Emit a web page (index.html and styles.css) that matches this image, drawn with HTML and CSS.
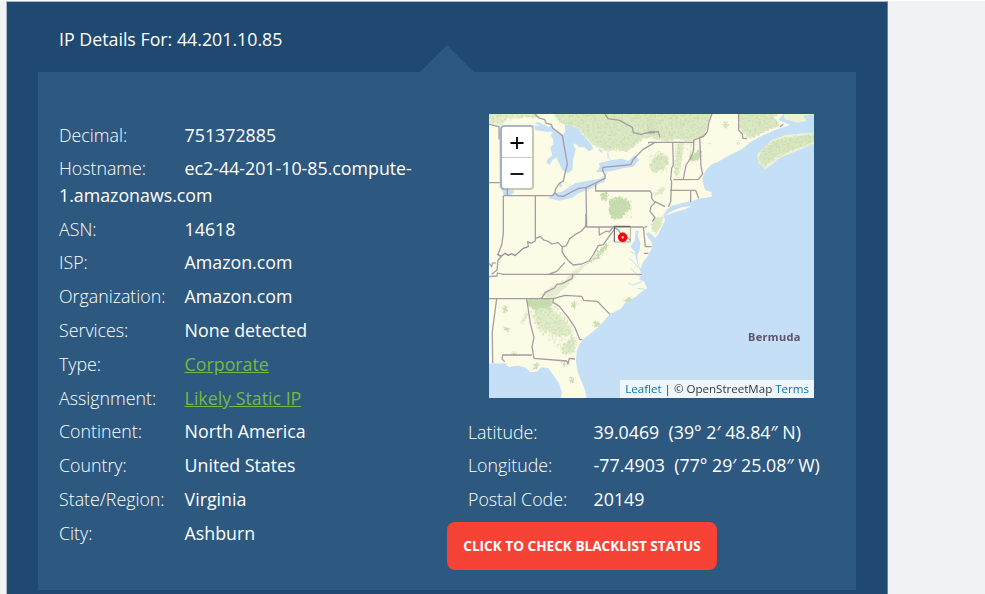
FILE: index.html
```html
<!DOCTYPE html>
<html lang="en">
<head>
<meta charset="utf-8">
<title>IP Details For: 44.201.10.85</title>
<link rel="stylesheet" href="styles.css">
</head>
<body>
<main class="card">
  <h1 class="title">IP Details For: 44.201.10.85</h1>
  <section class="panel">
    <div class="details">
      <p class="row"><span class="label">Decimal:</span><span>751372885</span></p>
      <p class="row"><span class="label">Hostname:</span><span>ec2-44-201-10-85.compute-<wbr>1.amazonaws.com</span></p>
      <p class="row"><span class="label">ASN:</span><span>14618</span></p>
      <p class="row"><span class="label">ISP:</span><span>Amazon.com</span></p>
      <p class="row"><span class="label">Organization:</span><span>Amazon.com</span></p>
      <p class="row"><span class="label">Services:</span><span>None detected</span></p>
      <p class="row"><span class="label">Type:</span><a href="#">Corporate</a></p>
      <p class="row"><span class="label">Assignment:</span><a href="#">Likely Static IP</a></p>
      <p class="row"><span class="label">Continent:</span><span>North America</span></p>
      <p class="row"><span class="label">Country:</span><span>United States</span></p>
      <p class="row"><span class="label">State/Region:</span><span>Virginia</span></p>
      <p class="row"><span class="label">City:</span><span>Ashburn</span></p>
    </div>
    <div class="location">
      <div class="map">
        <svg class="tiles" viewBox="12 12 975 852" preserveAspectRatio="none">
          <defs>
            <filter id="rough" x="-20%" y="-20%" width="140%" height="140%">
              <feTurbulence type="fractalNoise" baseFrequency="0.15" numOctaves="3" seed="4"/>
              <feDisplacementMap in="SourceGraphic" scale="16" xChannelSelector="R" yChannelSelector="G"/>
              <feGaussianBlur stdDeviation=".7"/>
            </filter>
            <filter id="mottle" x="0" y="0" width="100%" height="100%">
              <feTurbulence type="fractalNoise" baseFrequency="0.14" numOctaves="3" seed="9"/>
              <feColorMatrix values="0 0 0 0 0  0 0 0 0 0  0 0 0 0 0  4 0 0 0 -1.9"/>
              <feComposite in="SourceGraphic" operator="in"/>
            </filter>
          </defs>
          <rect x="0" y="0" width="1000" height="880" fill="#c5dff6"/>
          <!-- mainland -->
          <path fill="#fcfbe5" d="M0 0H900L895 12L880 30L915 45L865 62L825 80L795 97L775 115L755 125L725 140L700 155L680 163L665 178L658 190L652 205L655 222L660 240L680 247L683 240L677 258L663 263L645 265L625 272L590 280L560 287L545 300L535 316L540 330L534 345L518 375L510 385L503 376L490 366L483 372L500 398L502 412L488 438L472 460L466 478L460 462L456 440L464 420L466 400L458 376L462 362L452 362L450 390L436 410L450 425L452 445L464 478L470 495L462 508L478 515L486 535L470 545L452 560L425 575L405 598L375 612L355 635L340 652L315 672L295 688L283 703L275 725L273 755L278 785L290 815L300 840L305 870H226L231 848L222 820L205 795L190 775L170 772L155 785L137 787L120 772L100 767L70 770L60 760L0 762Z"/>
          <path fill="#fcfbe5" d="M537 318L560 303L590 292L622 287L600 298L570 307Z"/>
          <path fill="#fcfbe5" d="M672 252l10 4 -4 6 -14-2Z"/>
          <path fill="#eef2d4" d="M1000 67L960 70L900 75L860 90L835 115L817 132L820 158L840 178L855 168L885 143L930 125L960 112L1000 98Z"/>
          <path fill="#eef2d4" d="M890 0L900 28L940 38L965 32L955 18L985 12V0Z"/>
          <!-- vegetation -->
          <g fill="#d3e3bc" filter="url(#rough)">
            <path opacity=".6" d="M0 0H150L165 25L120 24L70 28L50 44L0 40Z"/>
            <path opacity=".8" d="M200 0H510V65L500 82L470 88L450 110L425 125L395 120L360 122L325 105L295 75L280 55L240 45L215 30Z"/>
            <path opacity=".8" d="M490 0H685L672 35L655 78L630 90L595 92L575 85L550 95L505 88L490 60Z"/>
            <path opacity=".8" d="M762 0H885L868 25L885 45L835 65L805 82L785 85L774 65L762 55Z"/>
            <path opacity=".8" d="M990 72L895 83L860 95L840 112L825 128L820 148L835 170L860 152L885 135L930 118L990 95Z"/>
            <path d="M345 252L358 245L370 255L367 270L350 270ZM372 268L405 260L425 270L440 285L420 312L402 330L380 325L372 305Z" fill="#c9ddb0"/>
            <path d="M500 150L520 128L548 140L552 160L535 178L508 188L495 175Z" opacity=".8"/>
            <path d="M612 135L630 130L642 118L650 132L640 150L618 155Z" fill="#c9ddb0"/>
            <path d="M575 100L595 100L592 135L585 185L575 205L568 180Z" opacity=".7"/>
            <path d="M508 325L536 318L528 350L510 375L498 350Z" opacity=".8"/>
            <path d="M385 384L375 395L340 422L332 442L306 458L323 456L345 440Z" fill="#c9ddb0"/>
            <path d="M338 410L323 440L300 460L265 483L240 510L210 525L165 555L205 565L240 535L292 476L330 446Z" opacity=".6"/>
            <path d="M128 567L205 565L200 590L150 600L128 585Z" fill="#c9ddb0"/>
            <path opacity=".65" d="M195 590L230 622L255 650L260 675L220 680L160 655L145 620L150 600Z"/>
            <path opacity=".75" d="M105 638L125 605L132 612L115 640ZM230 710L260 680L275 690L270 725L235 735Z"/>
            <path fill="#c9ddb0" d="M53 590L68 590L68 605L55 608ZM55 650L75 655L70 665L57 660ZM80 728L95 725L93 735L80 735ZM260 577L275 578L270 595L258 590ZM330 632L347 640L335 655L323 645ZM145 765L165 758L160 772L145 780ZM255 800L268 805L268 820L255 815ZM415 568L438 562L438 574L415 574ZM230 757L242 755L240 768L230 768Z"/>
            <path d="M716 35H728V52H716ZM668 98L678 98L675 108ZM752 95L762 97L758 108Z"/>
            <path d="M515 240L535 230L538 245L510 258Z" opacity=".7"/>
          </g>
          <g fill="#b9d39e" opacity=".5" filter="url(#mottle)">
            <path d="M0 0H150L160 22L70 28L40 40L0 36ZM200 0H510V70L450 105L395 118L340 108L290 65L230 40ZM500 0H685L655 78L595 90L500 80ZM762 0H885L868 25L885 45L805 80L774 60ZM820 150L835 115L870 90L990 72V95L930 118L860 152L835 172Z"/>
            <path d="M490 135L520 120L552 140L545 190L495 190ZM372 260H440V325H375ZM570 95H600L580 205H566ZM600 90H650V150H610ZM130 565L205 565L270 660L265 735L230 730L145 650Z"/>
          </g>
          <!-- Great Lakes and bays -->
          <g fill="#c5dff6">
            <path d="M42 62L50 48L66 44L90 46H140L165 48L150 40L158 36L185 48L204 62L188 66L150 60V50H60V240H88L86 248L76 257H56L52 240L44 232Z"/>
            <path d="M185 56L200 44L212 62L232 72L240 68L240 42L250 46L262 48L282 58L293 76L305 88L318 102L325 116L312 124L298 112L282 112L276 104L264 100L272 118L264 150L262 180L248 190L240 184L232 180L214 142L202 150L194 165L184 158L188 148L202 136L198 122L196 112L206 103L204 88L197 75L204 68Z"/>
            <path d="M190 265L205 250L230 246L270 220L310 212L345 206L360 195L358 216L340 222L320 235L300 242L280 250L260 264L222 272Z"/>
            <path d="M333 187L345 170L342 160L380 150L410 146L430 153L450 135L462 150L445 170L415 175L380 183L355 186Z"/>
            <path d="M340 116l10 4 3 10-10-6ZM222 222l8-2 3 8-8 4Z"/>
          </g>
          <g fill="none" stroke="#c5dff6" stroke-width="3">
            <path d="M466 500L452 490L438 475M460 475L445 455L433 445M450 430L436 425M455 400L460 420M470 515L445 525L430 520M480 538L458 535"/>
            <path d="M369 112V145M367 185L355 205M367 130L375 150" stroke-width="2"/>
          </g>
          <!-- state and national borders -->
          <g fill="none" stroke="#a69aa3" stroke-width="3.8" stroke-linejoin="round">
            <path d="M150 12L162 24L179 29L184 40L199 43L203 55L218 65L232 77L238 110L247 162L241 185L235 213L223 220L211 238L210 250L220 258L235 259L265 243L282 235L304 232L332 219L360 205L361 197L353 182L354 172L437 164L444 149L474 118L510 97"/>
            <path d="M12 43L25 46L42 50V88M12 218H44M67 257V237M56 257H203L211 247M360 12L369 26L404 31L425 43L442 52L445 68L469 74L480 69L510 68M490 66L520 65L525 82"/>
            <path d="M55 257V370L50 405L39 433L48 442L39 450L36 480L20 493M12 460L20 470L22 460L32 458M151 257V392L138 400L128 395L130 410L115 415L100 428L90 437L80 431L70 436L60 430L50 438L36 433M151 386L166 379L176 390L190 394L200 402L220 398L232 411L244 407L254 386L270 374L290 363L302 348L303 312M232 411L231 425L240 440L252 454L265 465L290 462L312 453L326 432L340 407L355 404L374 377L388 358M303 230L305 351H475M332 219V243H495L500 250V265L510 278L498 290L495 305L510 322L502 335M510 275L540 290M342 351L343 375L364 363L372 366L385 351M388 353L400 360L407 371L416 369L425 380L435 390"/>
            <path d="M475 351L481 410H500M477 430H490M486 348L478 353M550 290L557 275L560 215L557 207L560 175L565 165L563 97H492L490 100M563 97H626L627 90L655 80L667 65L672 35L681 12M626 90V120L617 145L603 165L595 207M644 82L648 170L653 192L640 208L565 209M555 241H632L641 265M617 242V276M761 12V61L772 72L774 85L786 86M885 50L895 43"/>
            <path d="M12 500L36 498L37 489L55 493H204H470M190 493L215 484L240 457M12 566H209M264 493L261 506L231 521L216 523L208 534L181 547L169 566M205 566L240 556L290 559L296 571L337 574L375 613M205 566L204 577L221 587L248 620L270 653L284 688L292 690M125 566L136 640L147 682L141 710L147 745L245 753L249 762L253 745L270 747M35 566L22 665L23 760M141 735H53L51 747L59 755"/>
          </g>
          <g fill="none" stroke="#8b808c" stroke-width="2" opacity=".7">
            <path d="M36 433L50 438L60 430L70 436L80 431L90 437L100 428L115 415L130 410M642 82L655 80L665 66"/>
          </g>
          <path fill="none" stroke="#50505a" stroke-width="3" d="M388 396V349H436"/>
          <path fill="none" stroke="#aaa" stroke-width="3" d="M436 349V396H388"/>
          <circle cx="413" cy="382" r="9.3" fill="#fcb7b0" stroke="#ff0010" stroke-width="10"/>
        </svg>
        <div class="zoom">
          <a class="zoom-btn" href="#" aria-label="Zoom in"><svg width="14" height="14" viewBox="0 0 14 14"><path d="M0.5 7H13.5M7 1V13"/></svg></a>
          <a class="zoom-btn" href="#" aria-label="Zoom out"><svg width="14" height="14" viewBox="0 0 14 14"><path d="M0.5 7H13.5"/></svg></a>
        </div>
        <span class="place">Bermuda</span>
        <div class="credit"><a href="#">Leaflet</a> | © OpenStreetMap <a href="#">Terms</a></div>
      </div>
      <div class="coords">
        <p class="row"><span class="label">Latitude:</span><span>39.0469&nbsp; (39° 2′ 48.84″ N)</span></p>
        <p class="row"><span class="label">Longitude:</span><span>-77.4903&nbsp; (77° 29′ 25.08″ W)</span></p>
        <p class="row"><span class="label">Postal Code:</span><span>20149</span></p>
      </div>
      <a class="button" href="#">CLICK TO CHECK BLACKLIST STATUS</a>
    </div>
  </section>
</main>
</body>
</html>
```
FILE: styles.css
```css
* { box-sizing: border-box; }
html { overflow: hidden; }
body {
  margin: 0;
  height: 594px;
  overflow: hidden;
  background: #f1f2f4;
  border-top: 1px solid #fff;
  font-family: "Open Sans", sans-serif;
  font-size: 17.8px;
  line-height: 26.4px;
  color: #fff;
}
.card {
  width: 882px;
  height: 610px;
  margin-left: 6px;
  padding: 0 31px;
  background: #204971;
  border: 1px solid #a9b9c9;
  border-right-color: #6482a0;
}
.title {
  margin: 0;
  padding: 24px 21px 19.6px;
  font-size: 17.8px;
  font-weight: 400;
  line-height: 26.4px;
}
.panel {
  position: relative;
  display: flex;
  width: 818px;
  height: 518px;
  padding: 42px 0 0 21px;
  background: #2d5980;
}
.panel::before {
  content: "";
  position: absolute;
  left: 382px;
  top: -27px;
  border: solid transparent;
  border-width: 0 27px 27px;
  border-bottom-color: #2d5980;
}
.details { width: 388px; padding: 7.6px 20px 0 0; }
.row { margin: 0 0 7.4px; white-space: nowrap; }
.details .row { white-space: normal; }
.label { display: inline-block; width: 125.6px; font-weight: 300; }
.row a { color: #76b843; text-decoration: underline; }
.location { width: 409px; }
.map {
  position: relative;
  width: 325px;
  height: 284px;
  margin-left: 42px;
  overflow: hidden;
}
.tiles { display: block; width: 325px; height: 284px; }
.zoom {
  position: absolute;
  left: 11px;
  top: 11px;
  width: 34px;
  border: 2px solid rgba(0,0,0,.2);
  border-radius: 4px;
  background: #fff;
  background-clip: padding-box;
}
.zoom-btn {
  display: flex;
  align-items: center;
  justify-content: center;
  height: 30px;
  padding-top: 1px;
}
.zoom-btn:first-child { height: 31px; padding-top: 2px; border-bottom: 1px solid #ccc; }
.zoom-btn path { fill: none; stroke: #000; stroke-width: 1.8; }
.place {
  position: absolute;
  left: 259px;
  top: 215px;
  color: #62506f;
  font-family: "Noto Sans", sans-serif;
  font-size: 11px;
  font-weight: 700;
  line-height: 16px;
  letter-spacing: .35px;
}
.credit {
  position: absolute;
  right: 0;
  bottom: 0;
  padding: 0 5px;
  background: rgba(255,255,255,.7);
  color: #333;
  font-size: 11.55px;
  line-height: 18px;
  white-space: nowrap;
}
.credit a { color: #0078a8; text-decoration: none; }
.coords { margin: 20.6px 0 0 21px; }
.button {
  display: block;
  width: 270px;
  height: 48px;
  margin-top: 9.4px;
  border-radius: 8px;
  background: #f64336;
  color: #fff;
  font-size: 13.6px;
  font-weight: 700;
  line-height: 48px;
  text-align: center;
  text-decoration: none;
  white-space: nowrap;
}
```
